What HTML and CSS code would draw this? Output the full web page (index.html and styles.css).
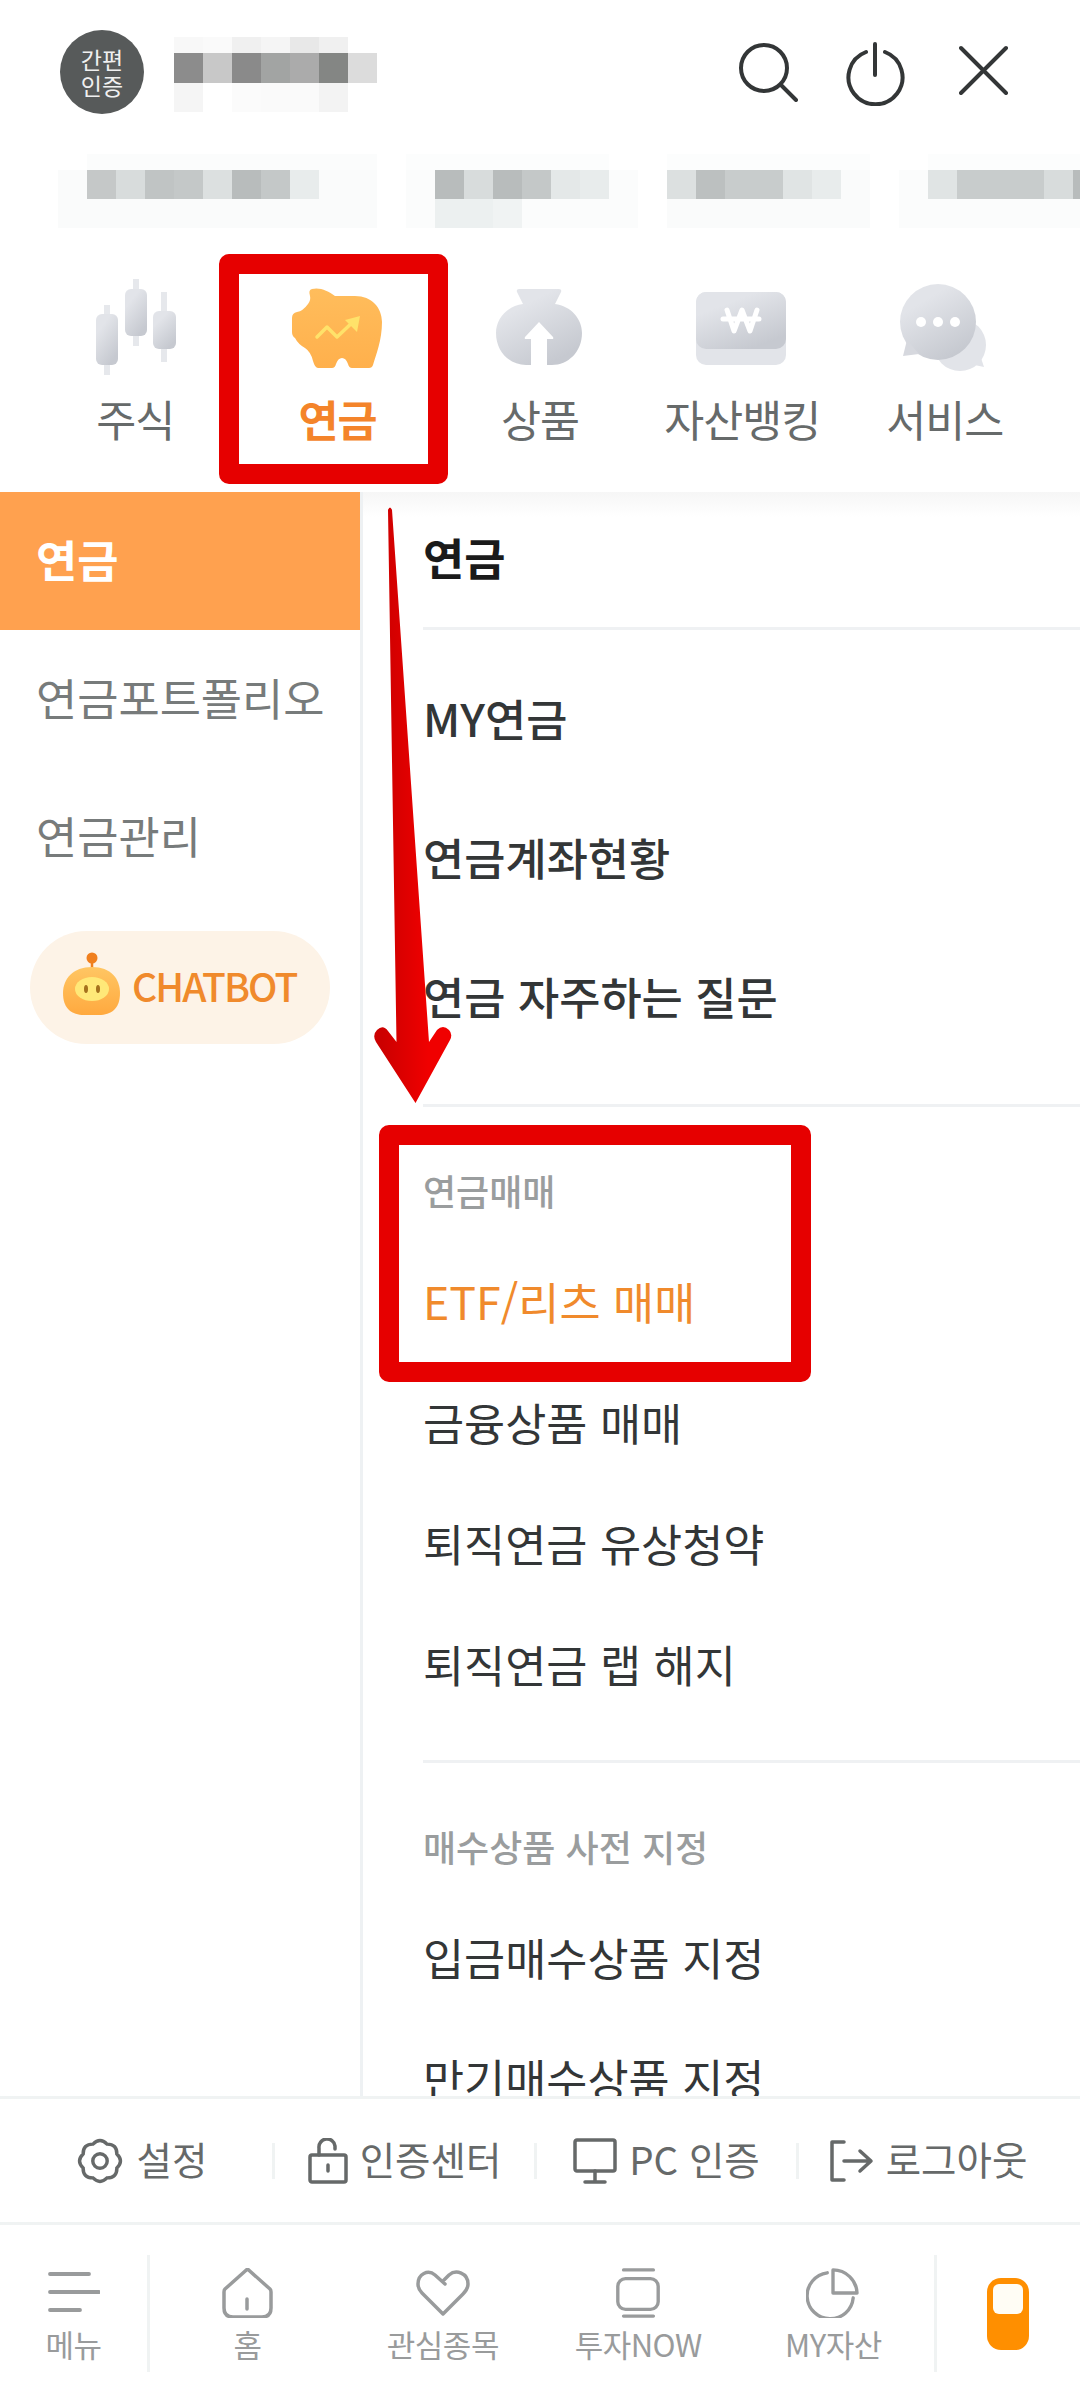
FILE: index.html
```html
<!DOCTYPE html>
<html lang="ko">
<head>
  <meta charset="UTF-8">
  <title>전체메뉴</title>
  <link rel="stylesheet" href="styles.css">
</head>
<body>

  <header class="cabecera">
    <div class="usuario">
      <div class="avatar">간편<br>인증</div>
      <svg class="mosaico-nombre" width="203" height="75" shape-rendering="crispEdges">
        <rect x="0" y="0" width="29" height="16" fill="#f8f8f8"/><rect x="29" y="0" width="29" height="16" fill="#fafafa"/><rect x="58" y="0" width="29" height="16" fill="#f0f0f0"/><rect x="87" y="0" width="29" height="16" fill="#f5f5f5"/><rect x="116" y="0" width="29" height="16" fill="#e8e8e8"/><rect x="145" y="0" width="29" height="16" fill="#f0f0f0"/>
        <rect x="0" y="16" width="29" height="30" fill="#8c8c8c"/><rect x="29" y="16" width="29" height="30" fill="#c8c8c8"/><rect x="58" y="16" width="29" height="30" fill="#8a8a8a"/><rect x="87" y="16" width="29" height="30" fill="#a2a4a3"/><rect x="116" y="16" width="29" height="30" fill="#ababab"/><rect x="145" y="16" width="29" height="30" fill="#848684"/><rect x="174" y="16" width="29" height="30" fill="#dcdcdc"/>
        <rect x="0" y="46" width="29" height="29" fill="#f5f5f5"/><rect x="58" y="46" width="29" height="29" fill="#fbfbfb"/><rect x="87" y="46" width="29" height="29" fill="#fafafa"/><rect x="116" y="46" width="29" height="29" fill="#fafafa"/><rect x="145" y="46" width="29" height="29" fill="#f3f3f3"/>
      </svg>
    </div>
    <div class="acciones">
      <svg class="icono" width="64" height="64" viewBox="734 38 64 64" fill="none" stroke="#333637" stroke-width="4" stroke-linecap="round">
        <circle cx="764" cy="68" r="23"/><path d="M781 85 L796 100"/>
      </svg>
      <svg class="icono" width="62" height="66" viewBox="844 40 62 66" fill="none" stroke="#333637" stroke-width="4" stroke-linecap="round">
        <path d="M866 52 A27 27 0 1 0 885 52"/><path d="M875 44 V75"/>
      </svg>
      <svg class="icono" width="50" height="50" viewBox="959 45 50 50" fill="none" stroke="#333637" stroke-width="4" stroke-linecap="round">
        <path d="M961 48 L1006 93 M1006 48 L961 93"/>
      </svg>
    </div>
  </header>

  <svg class="mosaico-cuenta" width="1080" height="74" shape-rendering="crispEdges">
    <rect x="87" y="0" width="290" height="16" fill="#fbfcfc"/><rect x="406" y="0" width="203" height="16" fill="#fcfdfd"/><rect x="667" y="0" width="203" height="16" fill="#fcfdfd"/><rect x="928" y="0" width="152" height="16" fill="#fcfdfd"/>
    <rect x="58" y="16" width="319" height="58" fill="#fafbfb"/><rect x="406" y="16" width="232" height="58" fill="#fbfcfc"/><rect x="667" y="16" width="203" height="58" fill="#fafbfb"/><rect x="899" y="16" width="181" height="58" fill="#fbfcfc"/>
    <rect x="87" y="16" width="29" height="29" fill="#c5c8c8"/><rect x="116" y="16" width="29" height="29" fill="#d8dcdc"/><rect x="145" y="16" width="29" height="29" fill="#c0c4c4"/><rect x="174" y="16" width="29" height="29" fill="#c4c8c8"/><rect x="203" y="16" width="29" height="29" fill="#dce0e0"/><rect x="232" y="16" width="29" height="29" fill="#b8bcbc"/><rect x="261" y="16" width="29" height="29" fill="#c4c8c8"/><rect x="290" y="16" width="29" height="29" fill="#e8ecec"/>
    <rect x="435" y="16" width="29" height="29" fill="#b8bcbc"/><rect x="464" y="16" width="29" height="29" fill="#d8dcdc"/><rect x="493" y="16" width="29" height="29" fill="#b8bcbc"/><rect x="522" y="16" width="29" height="29" fill="#c4c8c8"/><rect x="551" y="16" width="29" height="29" fill="#e4e8e8"/><rect x="580" y="16" width="29" height="29" fill="#e8ecec"/>
    <rect x="667" y="16" width="29" height="29" fill="#dce0e0"/><rect x="696" y="16" width="29" height="29" fill="#bcc0c0"/><rect x="725" y="16" width="58" height="29" fill="#c8cccc"/><rect x="783" y="16" width="29" height="29" fill="#e0e4e4"/><rect x="812" y="16" width="29" height="29" fill="#e8ecec"/>
    <rect x="928" y="16" width="29" height="29" fill="#e0e4e4"/><rect x="957" y="16" width="87" height="29" fill="#c8cccc"/><rect x="1044" y="16" width="29" height="29" fill="#d8dcdc"/><rect x="1073" y="16" width="7" height="29" fill="#b8bcbc"/>
    <rect x="435" y="45" width="58" height="29" fill="#ecf0f0"/><rect x="493" y="45" width="29" height="29" fill="#f0f3f3"/>
  </svg>

  <nav class="categorias">
    <div class="categoria">
      <svg width="120" height="100" viewBox="75 275 120 100">
        <defs>
          <linearGradient id="gris" x1="0" y1="0" x2="0.6" y2="1">
            <stop offset="0.3" stop-color="#e2e4e9"/><stop offset="1" stop-color="#c6c9d0"/>
          </linearGradient>
          <linearGradient id="cerdo" x1="0" y1="0" x2="0" y2="1">
            <stop offset="0" stop-color="#ffbd5c"/><stop offset="1" stop-color="#ffb04c"/>
          </linearGradient>
        </defs>
        <rect x="104" y="305" width="6" height="70" fill="#e6e8ec"/><rect x="96" y="314" width="22" height="51" rx="6" fill="url(#gris)"/>
        <rect x="133" y="279" width="6" height="67" fill="#e6e8ec"/><rect x="125" y="289" width="22" height="47" rx="6" fill="url(#gris)"/>
        <rect x="161" y="292" width="6" height="70" fill="#e6e8ec"/><rect x="153" y="311" width="23" height="38" rx="6" fill="url(#gris)"/>
      </svg>
      <span>주식</span>
    </div>
    <div class="categoria activa">
      <svg width="120" height="100" viewBox="278 275 120 100">
        <path fill="url(#cerdo)" d="M312 289 C320 287 328 291 335 296 L355 296 C372 296 382 308 382 322 C382 340 376 355 373 365 Q372 368 369 368 L352 368 Q349 368 348 364 Q346 358 342 358 Q338 358 336 364 Q335 368 332 368 L318 368 Q315 368 313 361 Q311 352 305 348 Q298 344 295 338 Q292 336 292 332 L292 318 Q292 313 297 312 Q303 311 308 304 Q311 300 310 296 Q308 290 312 289 Z"/>
        <path d="M317 337 L327 327 L337 337 L355 320" fill="none" stroke="#ffe26a" stroke-width="3.5" stroke-linecap="round" stroke-linejoin="round"/>
        <path d="M360 316 L345 320 L357 332 Z" fill="#ffe26a"/>
      </svg>
      <span>연금</span>
    </div>
    <div class="categoria">
      <svg width="120" height="100" viewBox="480 275 120 100">
        <path fill="url(#gris)" d="M519 289 H559 Q562 289 561 292 L555 304 C571 306 582 319 582 333 C582 352 568 365 552 365 H526 C510 365 496 352 496 333 C496 319 507 306 523 304 L517 292 Q516 289 519 289 Z"/>
        <path fill="#fff" d="M539 322 L553 337 Q554 339 552 339 H547 V366 H531 V339 H526 Q524 339 525 337 Z"/>
      </svg>
      <span>상품</span>
    </div>
    <div class="categoria">
      <svg width="120" height="100" viewBox="682 275 120 100">
        <rect x="696" y="292" width="90" height="73" rx="10" fill="#e2e4e9"/>
        <rect x="696" y="292" width="90" height="57" rx="10" fill="url(#gris)"/>
        <path d="M727 310 L734 331 L742 310 L750 331 L757 310 M723 319 H759" fill="none" stroke="#fff" stroke-width="5" stroke-linecap="round" stroke-linejoin="round"/>
      </svg>
      <span>자산뱅킹</span>
    </div>
    <div class="categoria">
      <svg width="120" height="100" viewBox="885 275 120 100">
        <circle cx="960" cy="345" r="26" fill="#e2e4e9"/><path d="M980 355 L984 367 L970 364 Z" fill="#e2e4e9"/>
        <circle cx="938" cy="322" r="38" fill="url(#gris)"/><path d="M907 340 L903 356 L919 354 Z" fill="#d6d8de"/>
        <circle cx="921" cy="322" r="5" fill="#fff"/><circle cx="938" cy="322" r="5" fill="#fff"/><circle cx="955" cy="322" r="5" fill="#fff"/>
      </svg>
      <span>서비스</span>
    </div>
  </nav>

  <div class="contenedor">
    <aside class="lateral">
      <div class="lateral-item activo">연금</div>
      <div class="lateral-item">연금포트폴리오</div>
      <div class="lateral-item">연금관리</div>
      <div class="chatbot">
        <svg width="60" height="66" viewBox="63 952 60 66">
          <defs>
            <linearGradient id="robot" x1="0" y1="0" x2="0" y2="1">
              <stop offset="0" stop-color="#ffc663"/><stop offset="1" stop-color="#ffa93f"/>
            </linearGradient>
          </defs>
          <path d="M93 960 V972" stroke="#f07f1e" stroke-width="2.5"/>
          <circle cx="93" cy="959" r="5.5" fill="#f07f1e"/>
          <path fill="url(#robot)" d="M93 968 C112 968 121 980 121 994 C121 1010 112 1016 100 1016 H85 C73 1016 64 1010 64 994 C64 980 74 968 93 968 Z"/>
          <ellipse cx="93" cy="990" rx="17" ry="12" fill="#ffe878"/>
          <ellipse cx="87" cy="990" rx="2" ry="4" fill="#a5711d"/><ellipse cx="99" cy="990" rx="2" ry="4" fill="#a5711d"/>
        </svg>
        <span>CHATBOT</span>
      </div>
    </aside>

    <main class="menu">
      <div class="menu-titulo">연금</div>
      <section class="grupo grupo-principal">
        <div class="menu-fuerte">MY연금</div>
        <div class="menu-fuerte">연금계좌현황</div>
        <div class="menu-fuerte">연금 자주하는 질문</div>
      </section>
      <section class="grupo grupo-medio">
        <div class="grupo-titulo">연금매매</div>
        <div class="menu-item naranja">ETF/리츠 매매</div>
        <div class="menu-item">금융상품 매매</div>
        <div class="menu-item">퇴직연금 유상청약</div>
        <div class="menu-item">퇴직연금 랩 해지</div>
      </section>
      <section class="grupo">
        <div class="grupo-titulo">매수상품 사전 지정</div>
        <div class="menu-item">입금매수상품 지정</div>
        <div class="menu-item">만기매수상품 지정</div>
      </section>
    </main>
  </div>

  <div class="ajustes">
    <div class="ajuste">
      <svg width="50" height="50" viewBox="-2 -2 52 52" fill="none" stroke="#666969" stroke-width="3.6">
        <path d="M41.55 16.73 Q49 24 41.55 31.27 Q41.68 41.68 31.27 41.55 Q24 49 16.73 41.55 Q6.32 41.68 6.45 31.27 Q-1 24 6.45 16.73 Q6.32 6.32 16.73 6.45 Q24 -1 31.27 6.45 Q41.68 6.32 41.55 16.73Z"/>
        <circle cx="24" cy="24" r="7.5"/>
      </svg>
      <span>설정</span>
    </div>
    <div class="ajuste">
      <svg width="40" height="46" viewBox="0 0 40 46" fill="none" stroke="#666969" stroke-width="3.5" stroke-linejoin="round" stroke-linecap="round">
        <rect x="2" y="17" width="36" height="27" rx="2"/>
        <path d="M11 17 V10 A8 8 0 0 1 27 8 V11"/>
        <path d="M20 27 V33"/>
      </svg>
      <span>인증센터</span>
    </div>
    <div class="ajuste">
      <svg width="44" height="46" viewBox="0 0 44 46" fill="none" stroke="#666969" stroke-width="3.5" stroke-linejoin="round" stroke-linecap="round">
        <rect x="2" y="2" width="40" height="31" rx="2"/>
        <path d="M22 33 V43 M12 44 H32"/>
      </svg>
      <span>PC 인증</span>
    </div>
    <div class="ajuste">
      <svg width="44" height="42" viewBox="0 0 44 42" fill="none" stroke="#666969" stroke-width="3.5" stroke-linejoin="round" stroke-linecap="round">
        <path d="M14 2 H2 V40 H14"/>
        <path d="M14 21 H40 M30 11 L41 21 L30 31"/>
      </svg>
      <span>로그아웃</span>
    </div>
  </div>

  <footer class="barra">
    <div class="barra-menu">
      <svg width="52" height="50" viewBox="46 2270 52 50" fill="none" stroke="#999b9c" stroke-width="3.8" stroke-linecap="round">
        <path d="M48 2276 H87 M48 2294 H97 M48 2312 H78"/>
      </svg>
      <span>메뉴</span>
    </div>
    <div class="barra-items">
      <div class="barra-item">
        <svg width="52" height="50" viewBox="222 2270 52 50" fill="none" stroke="#999b9c" stroke-width="3.5" stroke-linecap="round" stroke-linejoin="round">
          <path d="M247.5 2271 L270 2291 Q271 2292 271 2294 V2310 Q271 2319 262 2319 H233 Q224 2319 224 2310 V2294 Q224 2292 225 2291 Z"/>
          <path d="M247 2301 V2311"/>
        </svg>
        <span>홈</span>
      </div>
      <div class="barra-item">
        <svg width="54" height="50" viewBox="416 2270 54 50" fill="none" stroke="#999b9c" stroke-width="3.5" stroke-linecap="round" stroke-linejoin="round">
          <path d="M445 2286 L435 2277 C428 2271 418 2276 418 2286 C418 2290 420 2293 422 2295 L443 2316 L463 2296 C466 2293 468 2290 468 2286 C468 2275 456 2271 449 2277 L443 2283"/>
        </svg>
        <span>관심종목</span>
      </div>
      <div class="barra-item">
        <svg width="46" height="52" viewBox="616 2269 46 52" fill="none" stroke="#999b9c" stroke-width="3.5" stroke-linecap="round" stroke-linejoin="round">
          <path d="M624 2271 H655 M624 2319 H655"/>
          <rect x="618" y="2280" width="42" height="32" rx="8"/>
        </svg>
        <span>투자NOW</span>
      </div>
      <div class="barra-item">
        <svg width="54" height="52" viewBox="808 2269 54 52" fill="none" stroke="#999b9c" stroke-width="3.5" stroke-linecap="round" stroke-linejoin="round">
          <path d="M829 2274 A24 24 0 1 0 856 2300"/>
          <path d="M835 2271 V2295 H860 A25 25 0 0 0 835 2271 Z"/>
        </svg>
        <span>MY자산</span>
      </div>
    </div>
    <div class="barra-telefono">
      <div class="telefono"><div class="pantalla"></div></div>
    </div>
  </footer>

  <!-- marcas rojas encima de la captura -->
  <div class="marca marca-categoria"></div>
  <div class="marca marca-menu"></div>
  <svg class="flecha" width="90" height="610" viewBox="370 500 90 610">
    <defs>
      <linearGradient id="rojo" x1="0" y1="0" x2="1" y2="0">
        <stop offset="0.1" stop-color="#cc0000"/><stop offset="0.7" stop-color="#f00000"/>
      </linearGradient>
    </defs>
    <path fill="url(#rojo)" d="M388 510 Q390 505 392 510 L429 1042 L437 1030 Q443 1024 449 1030 Q453 1034 450 1040 L415.5 1103 L376 1042 Q372 1035 377 1030 Q383 1024 388 1031 L396.5 1042 Z"/>
  </svg>

</body>
</html>
```

FILE: styles.css
```css
* {
  box-sizing: border-box;
}

html, body {
  margin: 0;
  height: 2402px;
}

body {
  position: relative;
  display: flex;
  flex-direction: column;
  overflow: hidden;
  background-color: #fff;
  font-family: "Noto Sans CJK KR", "Noto Sans", sans-serif;
  color: #333637;
}

.cabecera {
  display: flex;
  justify-content: space-between;
  align-items: flex-start;
  padding: 30px 0 0 60px;
  height: 154px;
}

.usuario {
  display: flex;
  gap: 30px;
}

.avatar {
  width: 84px;
  height: 84px;
  border-radius: 50%;
  background-color: #575a5a;
  color: #f0f0f0;
  font-size: 23px;
  line-height: 26px;
  text-align: center;
  padding-top: 16px;
}

.mosaico-nombre {
  margin-top: 7px;
}

.acciones {
  position: relative;
  display: flex;
  width: 346px;
  padding-left: 0;
}

.icono {
  position: absolute;
}

.icono:nth-child(1) {
  left: 0;
  top: 8px;
}

.icono:nth-child(2) {
  left: 110px;
  top: 10px;
}

.icono:nth-child(3) {
  left: 225px;
  top: 15px;
}

.mosaico-cuenta {
  display: block;
  flex: none;
}

.categorias {
  display: flex;
  flex: none;
  height: 264px;
  padding: 47px 34px 0;
}

.categoria {
  width: 202.4px;
  display: flex;
  flex-direction: column;
  align-items: center;
  font-size: 43.5px;
  line-height: 60px;
  color: #666a6a;
  letter-spacing: -1px;
}

.categoria svg {
  flex: none;
  margin-bottom: 14px;
}

.categoria.activa {
  color: #f4842a;
  font-weight: bold;
}

.contenedor {
  flex: 1;
  min-height: 0;
  display: flex;
  overflow: hidden;
}

.lateral {
  flex: none;
  width: 363px;
  border-right: 3px solid #eef1f3;
}

.lateral-item {
  height: 138px;
  display: flex;
  align-items: center;
  padding: 0 0 6px 36px;
  font-size: 44.8px;
  color: #777b7b;
}

.lateral-item.activo {
  background-color: #ffa14f;
  color: #fff;
  font-weight: bold;
}

.chatbot {
  display: flex;
  align-items: center;
  gap: 10px;
  width: 300px;
  height: 113px;
  margin: 25px 0 0 30px;
  padding: 0 0 0 32px;
  border-radius: 57px;
  background-color: #fdf3e7;
  color: #f08a2c;
  font-size: 39px;
  font-weight: 500;
  letter-spacing: -1.9px;
}

.chatbot svg {
  margin-top: -8px;
}

.chatbot span {
  margin-top: -6px;
}

.menu {
  flex: 1;
  padding-left: 60px;
  background: linear-gradient(#f6f6f6, #fff 25px);
}

.menu-titulo {
  height: 138px;
  display: flex;
  align-items: center;
  padding-bottom: 6px;
  font-size: 44.8px;
  font-weight: bold;
  color: #1a1a1a;
  border-bottom: 3px solid #eff1f3;
}

.grupo {
  border-bottom: 3px solid #eff1f3;
}

.grupo-principal {
  padding: 20px 0 37px;
}

.grupo-medio {
  padding-bottom: 34px;
}

.menu-fuerte {
  height: 139px;
  display: flex;
  align-items: center;
  padding-bottom: 4px;
  font-size: 44.8px;
  font-weight: 500;
}

.grupo-titulo {
  height: 50px;
  margin: 60px 0 25px;
  display: flex;
  align-items: center;
  padding-bottom: 5px;
  font-size: 36px;
  font-weight: 500;
  color: #9a9d9e;
}

.menu-item {
  height: 121px;
  display: flex;
  align-items: center;
  padding-bottom: 4px;
  font-size: 44.7px;
}

.naranja {
  color: #f08a2c;
}

.ajustes {
  flex: none;
  height: 126px;
  display: grid;
  grid-template-columns: repeat(4, 262px);
  align-items: center;
  padding: 0 22px 0 10px;
  border-top: 3px solid #f0f3f3;
}

.ajuste {
  height: 36px;
  display: flex;
  align-items: center;
  justify-content: center;
  gap: 12px;
  font-size: 38.5px;
  color: #666969;
  white-space: nowrap;
}

.ajuste span {
  margin-top: -6px;
}

.ajuste + .ajuste {
  border-left: 3px solid #f0f3f3;
}

.ajuste svg {
  flex: none;
}

.barra {
  flex: none;
  height: 180px;
  display: flex;
  padding-top: 30px;
  border-top: 3px solid #f0f3f3;
}

.barra-menu, .barra-item {
  display: flex;
  flex-direction: column;
  align-items: center;
  padding-top: 13px;
  font-size: 31px;
  line-height: 40px;
  color: #999b9c;
  height: 117px;
  letter-spacing: -0.5px;
}

.barra-menu {
  width: 150px;
  border-right: 3px solid #f0f3f3;
}

.barra-menu svg, .barra-item svg {
  flex: none;
  margin-bottom: 6px;
  height: 50px;
}

.barra-items {
  flex: 1;
  display: grid;
  grid-template-columns: repeat(4, 1fr);
  padding-right: 3px;
}

.barra-telefono {
  flex: none;
  width: 146px;
  height: 117px;
  border-left: 3px solid #f0f3f3;
  padding: 23px 0 0 50px;
}

.telefono {
  width: 42px;
  height: 72px;
  padding: 6px;
  border-radius: 14px;
  background-color: #ff8f00;
}

.pantalla {
  width: 30px;
  height: 30px;
  border-radius: 6px;
  background-color: #fffdf5;
}

.marca {
  position: absolute;
  border: 20px solid #e60000;
  border-radius: 10px;
}

.marca-categoria {
  left: 219px;
  top: 254px;
  width: 229px;
  height: 230px;
}

.marca-menu {
  left: 379px;
  top: 1125px;
  width: 432px;
  height: 257px;
}

.flecha {
  position: absolute;
  left: 370px;
  top: 500px;
}
```
